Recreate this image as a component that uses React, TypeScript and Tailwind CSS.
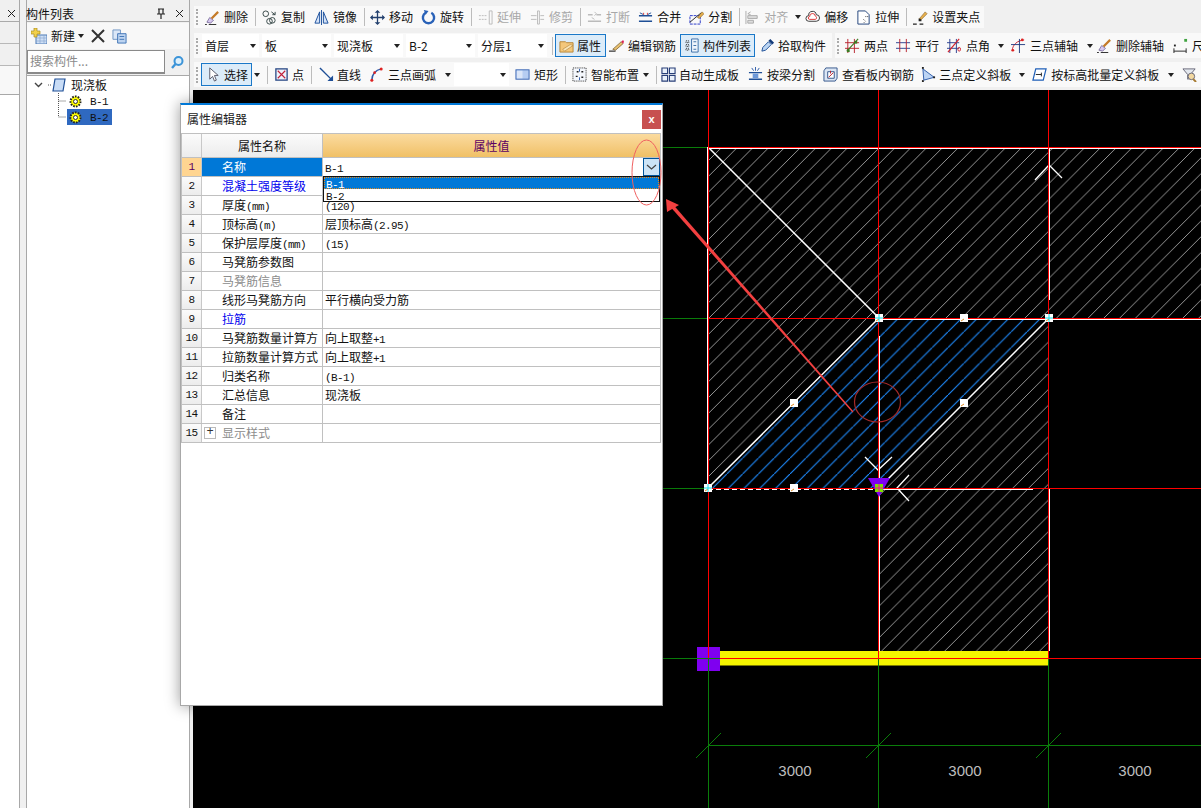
import type { ReactNode } from "react";

const cjk = "[font-family:'Noto_Sans_CJK_SC','Liberation_Sans',sans-serif]";

// icons are drawn on a 16x16 box
const icons: Record<string, ReactNode> = {
  broom: (<><path d="M0 15.5h2M4 15.5h8" stroke="#222" /><path d="M2 13l3-5 4 3-3 3z" fill="#d6c8ee" stroke="#5a4a80" strokeWidth=".7" /><path d="M7 9l7-7" stroke="#c47a28" strokeWidth="2.4" /></>),
  copy: (<><circle cx="4" cy="4" r="3" fill="none" stroke="#344" /><circle cx="11" cy="11" r="3" fill="none" stroke="#344" /><circle cx="8" cy="12" r="3" fill="none" stroke="#344" /><path d="M10 2l4 3M14 2v3h-3" fill="none" stroke="#344" /></>),
  mirror: (<><path d="M1 14L6 2v12zM15 14L10 2v12z" fill="#d4e2f7" stroke="#1b4f9c" /><path d="M8 0v16" stroke="#1b4f9c" /></>),
  move: (<><path d="M8 1v14M1 8h14" stroke="#23406e" strokeWidth="1.4" /><path d="M8 0l3 3H5zM8 16l3-3H5zM0 8l3-3v6zM16 8l-3-3v6z" fill="#23406e" /></>),
  rotate: (<><path d="M5 3a6 6 0 1 0 6 0" fill="none" stroke="#2a62b8" strokeWidth="2.6" /><path d="M3 0l5 1-3 4z" fill="#2a62b8" /></>),
  extend: (<><path d="M1 6h8M1 10h8" stroke="#bbb" strokeDasharray="2 1" /><path d="M12 1h3v14h-3z" fill="none" stroke="#bbb" /></>),
  trim: (<><path d="M1 6h6M1 10h6M11 6h4M11 10h4" stroke="#bbb" /><path d="M8 1h2v14H8z" fill="none" stroke="#bbb" /></>),
  breakLine: (<><path d="M1 5h5M10 5h5M1 12h14" stroke="#bbb" strokeWidth="1.6" /><path d="M8 2l2 2-2 2M5 8l3 2" fill="none" stroke="#bbb" /></>),
  merge: (<><path d="M1 6h14M1 12h14" stroke="#1f4f96" strokeWidth="1.6" /><path d="M2 3l4 2M14 3l-4 2" stroke="#1f4f96" /><path d="M6 3v2M10 3v2" stroke="#d33" /></>),
  split: (<><path d="M1 6h11v9H1z" fill="none" stroke="#2433c8" strokeDasharray="3 1" /><path d="M1 13L13 3" stroke="#222" /><path d="M9 8l5-6 2 2-5 5z" fill="#e8b04c" stroke="#7a5a20" strokeWidth=".6" /></>),
  align: (<><path d="M1 1v14" stroke="#aaa" /><path d="M3 6h10v3H3zM3 11h6v3H3z" fill="#ddd" stroke="#aaa" /><path d="M6 2L3 4l3 1" fill="none" stroke="#aaa" /></>),
  offset: (<><path d="M4 12a3 3 0 0 1 0-6 4 4 0 0 1 8-1 3.5 3.5 0 0 1 0 7z" fill="#fff" stroke="#333" /><path d="M5 10a1.5 1.5 0 0 1 0-3 2.5 2.5 0 0 1 6-.5 1.8 1.8 0 0 1 0 3.5z" fill="none" stroke="#d33" /></>),
  stretch: (<><path d="M2 1h8l4 4v10H2z" fill="#fff" stroke="#1d3f78" /><path d="M10 7h3M8 10l2 2-2 2" fill="none" stroke="#333" strokeDasharray="1 1" /></>),
  grip: (<><path d="M0 15h4M7 15h4" stroke="#222" strokeWidth="1.4" /><rect x="6" y="9" width="3" height="3" fill="#222" /><path d="M7 9l6-7 2 2-6 6z" fill="#e8b04c" stroke="#7a5a20" strokeWidth=".6" /></>),
  attr: (<><path d="M1 4h6l1 1h7v10H1z" fill="#f4c77a" stroke="#b78536" /><path d="M4 12l8-5 3 1-9 6z" fill="#f9e5b8" stroke="#a87a30" strokeWidth=".6" /></>),
  pencil: (<><path d="M0 14h7" stroke="#222" strokeWidth="1.2" /><path d="M4 12L13 4l2 2-8 7z" fill="#e8c070" stroke="#6a5020" strokeWidth=".7" /><path d="M13 4l2-2 1 2-1 2z" fill="#d25" /></>),
  list: (<><path d="M7 1h7v14H7z" fill="#eef4fb" stroke="#3a6ea8" /><path d="M9 4h3M9 8h3M9 12h3" stroke="#3a6ea8" /><path d="M1 3h3v2H1zM1 7h3v2H1zM1 11h3v2H1z" fill="none" stroke="#222" strokeDasharray="1 1" /></>),
  dropper: (<><path d="M2 14l1-4 6-6 3 3-6 6z" fill="#bcd6f4" stroke="#1d4f96" /><path d="M9 3l2-2 4 4-2 2z" fill="#123a78" /></>),
  twoPoint: (<><path d="M3 1v15M10 1v15M0 5h15M0 11h15" stroke="#b8232f" /><path d="M2 14L14 1" stroke="#3c7a22" strokeWidth="1.2" /><rect x="2" y="12" width="3" height="3" fill="#3c7a22" /><rect x="10" y="3" width="3" height="3" fill="#3c7a22" /></>),
  parallel: (<><path d="M0 5h15M0 11h15" stroke="#2a3f8f" /><path d="M4 1v14M11 1v14" stroke="#b8232f" /></>),
  angle: (<><path d="M3 1v15M10 1v15M0 5h13M0 11h13" stroke="#2a3f8f" /><path d="M1 15L13 1" stroke="#d2232f" strokeWidth="1.3" /><ellipse cx="13" cy="12" rx="1.4" ry="2" fill="none" stroke="#d2232f" /></>),
  arcAxis: (<><path d="M1 14C2 7 6 3 14 2" fill="none" stroke="#c8232f" /><path d="M9 1v15M0 7h15" stroke="#223d80" /><circle cx="2" cy="13" r="1.4" fill="#d22" /><circle cx="12" cy="2" r="1.4" fill="#d22" /></>),
  dim: (<><path d="M1 11v5M14 11v5M1 14h13" stroke="#222" /><rect x="1" y="7" width="2" height="2" fill="#222" /><rect x="12" y="1" width="3" height="3" fill="#3fa33f" /></>),
  pointer: (<path d="M4 1v12l3-3 2 5 2-1-2-5h4z" fill="#fff" stroke="#556" />),
  point: (<><rect x="2" y="2" width="12" height="12" fill="#eef3fb" stroke="#2c4a86" strokeWidth="1.4" /><path d="M4 4l8 8M12 4l-8 8" stroke="#c0223a" strokeWidth="1.2" /></>),
  line: (<><path d="M1 1l13 13" stroke="#1e4e96" strokeWidth="1.5" /><path d="M15 15V9l-6 6z" fill="#1e4e96" /></>),
  arc: (<><path d="M3 14C3 8 7 3 13 2" fill="none" stroke="#2c5aa8" strokeWidth="1.6" /><circle cx="3" cy="14" r="1.6" fill="#d22" /><circle cx="6" cy="6" r="1.4" fill="#d22" /><circle cx="13" cy="2" r="1.6" fill="#d22" /></>),
  rect: (<><rect x="1" y="3" width="14" height="10" fill="#b6cdf2" stroke="#3763b0" /><rect x="2" y="4" width="6" height="8" fill="#dbe6f8" /></>),
  smart: (<><rect x="1" y="1" width="14" height="14" fill="#f4f7fc" stroke="#222" strokeDasharray="1 1" /><path d="M5 5h2M4 10h2M10 5h2M10 11h2" stroke="#222" strokeWidth="1.5" /><path d="M8 2v3M8 11v3" stroke="#2c5aa8" /></>),
  auto: (<><path d="M1 1h6v6H1zM9 1h6v6H9zM1 9h6v6H1zM9 9h6v6H9z" fill="#eaf1fb" stroke="#283f78" strokeWidth="1.2" /></>),
  beam: (<><path d="M1 6h14M1 13h14" stroke="#1f4f96" strokeWidth="1.5" /><rect x="5" y="7" width="6" height="5" fill="#6d98d8" /><path d="M4 1l2 3M12 1l-2 3M8 0v4" stroke="#2c5aa8" /></>),
  view: (<><path d="M3 1h12v11L13 15H1V4z" fill="#dbe6f4" stroke="#33558c" /><path d="M5 5h7v7H5z" fill="#fff" stroke="#33558c" /><path d="M6 11l5-5M8 4v3" stroke="#b8232f" /></>),
  tri: (<><path d="M2 2l12 9-11 3z" fill="#bcd4f4" stroke="#2c5aa8" /><rect x="1" y="0" width="2" height="2" fill="#222" /><rect x="1" y="14" width="2" height="2" fill="#222" /><rect x="13" y="10" width="2" height="2" fill="#222" /></>),
  batch: (<><path d="M4 2h11l-3 12H1z" fill="#fff" stroke="#1f5fb8" strokeWidth="1.3" /><path d="M4 8h6M10 6v4" stroke="#222" /></>),
  zoomBox: (<><path d="M1 2h13L9 8v4L6 13V8z" fill="#e4e8ee" stroke="#667" /><circle cx="10" cy="10" r="3.5" fill="#f2d8a0" stroke="#667" /><path d="M12 13l3 3" stroke="#a67a30" strokeWidth="2" /></>),
  newItem: (<><path d="M5 7h11v9H5z" fill="#cfe0f6" stroke="#4a78b4" /><path d="M5 10h11M5 13h11M9 7v9M13 7v9" stroke="#8aa8d0" strokeWidth=".7" /><path d="M3 0h3v3h3v3H6v3H3V6H0V3h3z" fill="#f2d04a" stroke="#a88a20" strokeWidth=".7" /></>),
  dupe: (<><path d="M1 1h8v10H1z" fill="#dbe7f7" stroke="#6f94c2" /><path d="M6 5h9v10H6z" fill="#bcd3f0" stroke="#3f73b5" /><path d="M8 8h5M8 11h5" stroke="#3f73b5" /></>),
};

function Icon({ name, size = 16 }: { name: string; size?: number }) {
  return (
    <svg viewBox="0 0 16 16" width={size} height={size} className="shrink-0">
      {icons[name]}
    </svg>
  );
}

function Caret({ cls = "" }: { cls?: string }) {
  return <span className={`block shrink-0 w-0 h-0 border-x-[3.5px] border-x-transparent border-t-[4px] border-t-[#222] ${cls}`} />;
}

function Grip() {
  return <span className="w-[3px] h-[16px] shrink-0 border-l-[2px] border-dotted border-l-[#aaa]" />;
}

function Sep() {
  return <i className="w-px h-[18px] -ml-px -mr-[3px] shrink-0 bg-[#bcbcbc]" />;
}

function Tool(props: { icon: string; label: string; dim?: boolean; caret?: boolean; caretCls?: string; box?: string; cls?: string }) {
  return (
    <div className={`flex items-center shrink-0 gap-1 ${props.dim ? "text-[#a8a8a8]" : "text-[#111]"} ${props.cls ?? ""}`}>
      <span className={`flex justify-center shrink-0 ${props.box ?? "w-4"}`}>
        <Icon name={props.icon} size={15} />
      </span>
      <span>{props.label}</span>
      {props.caret && <Caret cls={props.caretCls ?? ""} />}
    </div>
  );
}

function Toggle({ icon, label, cls }: { icon: string; label: string; cls: string }) {
  return (
    <div className={`flex items-center h-[23px] shrink-0 border border-[#1a78c8] bg-[#dcecf9] ${cls}`}>
      <Icon name={icon} size={15} />
      <span className="ml-[3px]">{label}</span>
    </div>
  );
}

function Pick({ text, cls }: { text: string; cls: string }) {
  return (
    <div className={`flex items-center justify-between h-[23px] pl-[3px] pr-[3px] shrink-0 bg-white ${cls}`}>
      <span>{text}</span>
      <Caret />
    </div>
  );
}

// latin runs use a narrow mono so they keep the width of the old bitmap font
function T({ s }: { s: string }) {
  return (
    <>
      {s.split(/([\x00-\x7f]+)/).map((p, i) =>
        /[\x00-\x7f]/.test(p) ? (
          <span key={i} className="[font-family:'Liberation_Mono',monospace] text-[11px] tracking-[-0.6px]">{p}</span>
        ) : (
          <span key={i}>{p}</span>
        )
      )}
    </>
  );
}

const rows = [
  { name: "名称", value: "B-1" },
  { name: "混凝土强度等级", value: "", tone: "text-[#0000ee]" },
  { name: "厚度(mm)", value: "(120)" },
  { name: "顶标高(m)", value: "层顶标高(2.95)" },
  { name: "保护层厚度(mm)", value: "(15)" },
  { name: "马凳筋参数图", value: "" },
  { name: "马凳筋信息", value: "", tone: "text-[#8c8c8c]" },
  { name: "线形马凳筋方向", value: "平行横向受力筋" },
  { name: "拉筋", value: "", tone: "text-[#0000ee]" },
  { name: "马凳筋数量计算方", value: "向上取整+1" },
  { name: "拉筋数量计算方式", value: "向上取整+1" },
  { name: "归类名称", value: "(B-1)" },
  { name: "汇总信息", value: "现浇板" },
  { name: "备注", value: "" },
  { name: "显示样式", value: "", tone: "text-[#8c8c8c]", plus: true },
];

function PropertyDialog() {
  return (
    <div className="absolute left-[180px] top-[103px] w-[483px] h-[603px] z-10 bg-white border border-[#a8a8a8] border-t-2 border-t-[#0078d7] shadow-[0_0_14px_rgba(0,0,0,0.4)]">
      <div className="flex items-start h-[28px] pl-[6px]">
        <span className="mt-[5px] text-[#222]">属性编辑器</span>
        <button className="ml-auto mt-[5px] mr-px w-[19px] h-[19px] bg-[#c75050] text-white text-[11px] font-bold leading-[17px] [font-family:'Liberation_Sans',sans-serif]">x</button>
      </div>
      <div className="w-[480px] border-l border-r border-t border-[#c0c0c0]">
        <div className="flex h-[24px] border-b border-[#c0c0c0]">
          <div className="w-[20px] border-r border-[#c8c8c8] bg-gradient-to-b from-[#fbfbfb] to-[#ececec]" />
          <div className="w-[121px] border-r border-[#c0c0c0] flex items-center justify-center bg-gradient-to-b from-[#fbfbfb] to-[#ececec]">属性名称</div>
          <div className="flex-1 flex items-center justify-center text-[#5b0063] bg-gradient-to-b from-[#fbdb9f] to-[#f0c065]">属性值</div>
        </div>
        {rows.map((r, i) => (
          <div key={r.name} className="flex h-[19px] leading-[18px] border-b border-[#c0c0c0]">
            <div className={`w-[20px] border-r border-[#c8c8c8] text-center [font-family:'Liberation_Mono',monospace] text-[11px] tracking-[-0.6px] ${i === 0 ? "bg-[#ffd591] text-[#5b0063]" : "bg-gradient-to-b from-[#fbfbfb] to-[#ececec]"}`}>
              {i + 1}
            </div>
            <div className={`relative w-[121px] border-r border-[#c0c0c0] pl-[20px] whitespace-nowrap overflow-hidden ${i === 0 ? "bg-[#0078d7] text-white" : r.tone ?? ""}`}>
              {r.plus && (
                <span className="absolute left-[2px] top-[3px] w-[12px] h-[12px] border border-[#bbb] text-[#333] text-[12px] leading-[9px] text-center [font-family:'Liberation_Mono',monospace]">+</span>
              )}
              <T s={r.name} />
            </div>
            <div className="relative flex-1 pl-[2px] whitespace-nowrap">
              <T s={r.value} />
              {i === 0 && (
                <>
                  <div className="absolute right-0 top-0 w-[17px] h-[18px] border border-[#005499] bg-[#cce4f7] flex items-center justify-center">
                    <svg width="11" height="6" viewBox="0 0 11 6"><path d="M1 1l4.5 4L10 1" fill="none" stroke="#444" strokeWidth="1.2" /></svg>
                  </div>
                  <div className="absolute left-0 right-0 top-[18px] h-[26px] z-10 bg-white border border-[#111] leading-[12px]">
                    <div className="h-[12px] pl-[2px] bg-[#0078d7] text-white outline-dotted outline-1 -outline-offset-1 outline-[#e08a20]">
                      <T s="B-1" />
                    </div>
                    <div className="h-[12px] pl-[2px]"><T s="B-2" /></div>
                  </div>
                </>
              )}
            </div>
          </div>
        ))}
      </div>
    </div>
  );
}

function Gear() {
  return (
    <svg width="13" height="13" viewBox="0 0 13 13" className="shrink-0">
      <circle cx="6.5" cy="6.5" r="5" fill="#ffff00" stroke="#222" strokeWidth="2" strokeDasharray="1.6 1.2" />
      <circle cx="6.5" cy="6.5" r="2" fill="#fff" stroke="#333" />
    </svg>
  );
}

function ListPanel() {
  return (
    <div className="w-[164px] shrink-0 flex flex-col ml-[6px] border-l border-r border-[#a8a8a8]">
      <div className="h-[16px] mt-[6px] flex items-center pr-[3px] border-b border-[#aaa]">
        <span className="text-[#111] -ml-px">构件列表</span>
        <svg width="10" height="11" viewBox="0 0 10 11" className="ml-auto mr-[9px]"><path d="M2 1h6M3 1v5M7 1v5M1 6h8M5 6v5" stroke="#222" fill="none" strokeWidth="1.2" /></svg>
        <svg width="9" height="9" viewBox="0 0 9 9" className="mr-[2px]"><path d="M1 1l7 7M8 1L1 8" stroke="#222" /></svg>
      </div>
      <div className="h-[26px] mt-px flex items-center pl-[4px] bg-[#f8f8f8]">
        <Icon name="newItem" size={16} />
        <span className="ml-[4px] text-[#111]">新建</span>
        <Caret cls="ml-[3px]" />
        <svg width="14" height="14" viewBox="0 0 14 14" className="ml-[7px]"><path d="M1 1l12 12M13 1L1 13" stroke="#333" strokeWidth="2" /></svg>
        <span className="ml-[7px]"><Icon name="dupe" size={15} /></span>
      </div>
      <div className="h-[24px] mt-px flex">
        <div className="w-[138px] border border-[#8a8a8a] border-b-2 bg-white pl-[2px] leading-[20px] text-[#8a8a8a]">搜索构件...</div>
        <div className="flex-1 flex items-center justify-center">
          <svg width="15" height="15" viewBox="0 0 15 15"><circle cx="8.5" cy="6" r="4" fill="#dff0fb" stroke="#3c94d8" strokeWidth="2" /><path d="M5.5 9L2 13" stroke="#3c94d8" strokeWidth="2.4" /></svg>
        </div>
      </div>
      <div className="relative flex-1 mt-px pt-px bg-white border-t border-[#a8a8a8]">
        <svg width="40" height="50" className="absolute left-[18px] top-px">
          <path d="M3 8h3M13.5 16v24M13.5 24h8M13.5 40h8" stroke="#555" strokeDasharray="1 1" fill="none" />
        </svg>
        <div className="relative flex items-center h-[16px]">
          <svg width="9" height="6" viewBox="0 0 9 6" className="ml-[7px]"><path d="M1 1l3.5 3.5L8 1" fill="none" stroke="#444" strokeWidth="1.4" /></svg>
          <svg width="14" height="14" viewBox="0 0 14 14" className="ml-[9px]"><path d="M3 1h10l-2 12H1z" fill="#c8dcf6" stroke="#1f4f96" strokeWidth="1.2" /></svg>
          <span className="ml-[5px] text-[#111]">现浇板</span>
        </div>
        <div className="relative flex items-center h-[16px] ml-[42px]">
          <Gear />
          <span className="ml-[8px]"><T s="B-1" /></span>
        </div>
        <div className="relative flex items-center h-[16px] ml-[40px] pl-[2px] w-[45px] bg-[#2f69c0]">
          <Gear />
          <span className="ml-[8px]"><T s="B-2" /></span>
        </div>
      </div>
    </div>
  );
}

function Toolbars() {
  return (
    <div className="pt-[6px] pb-[3px] pl-px text-[12px] whitespace-nowrap overflow-hidden">
      <div className="flex items-center gap-2 w-[790px] h-[22px] pl-[2px] bg-[#f9f9f9]">
        <Grip />
        <Tool icon="broom" label="删除" cls="-ml-[3px]" />
        <Sep />
        <Tool icon="copy" label="复制" />
        <Tool icon="mirror" label="镜像" />
        <Sep />
        <Tool icon="move" label="移动" box="w-[15px]" />
        <Tool icon="rotate" label="旋转" box="w-[15px]" />
        <Sep />
        <Tool icon="extend" label="延伸" dim />
        <Tool icon="trim" label="修剪" dim />
        <Sep />
        <Tool icon="breakLine" label="打断" dim />
        <Tool icon="merge" label="合并" cls="-ml-px" />
        <Tool icon="split" label="分割" cls="-ml-px" />
        <Sep />
        <Tool icon="align" label="对齐" dim caret caretCls="ml-[3px]" box="w-[15px]" />
        <Tool icon="offset" label="偏移" cls="-ml-[5px]" />
        <Tool icon="stretch" label="拉伸" box="w-[15px]" />
        <Sep />
        <Tool icon="grip" label="设置夹点" />
      </div>
      <div className="flex mt-[5px] h-[25px]">
        <div className="flex items-center w-[638px] pl-[2px] bg-[#f9f9f9]">
          <Grip />
          <div className="flex items-center gap-[3px] ml-[3px]">
            <Pick text="首层" cls="w-[57px]" />
            <Pick text="板" cls="w-[69px]" />
            <Pick text="现浇板" cls="w-[69px]" />
            <Pick text="B-2" cls="w-[69px]" />
            <Pick text="分层1" cls="w-[69px]" />
          </div>
          <i className="w-px h-[18px] ml-[5px] bg-[#bcbcbc]" />
          <Toggle icon="attr" label="属性" cls="w-[51px] ml-[2px] pl-[3px]" />
          <Tool icon="pencil" label="编辑钢筋" cls="ml-[2px]" />
          <Toggle icon="list" label="构件列表" cls="w-[75px] ml-[4px] pl-[4px]" />
          <Tool icon="dropper" label="拾取构件" box="w-[13px]" cls="ml-[6px]" />
        </div>
        <div className="flex items-center gap-2 flex-1 ml-[3px] pl-[2px] bg-[#f9f9f9] overflow-hidden">
          <Grip />
          <Tool icon="twoPoint" label="两点" box="w-[15px]" cls="-ml-[3px]" />
          <Tool icon="parallel" label="平行" box="w-[15px]" />
          <Tool icon="angle" label="点角" box="w-[15px]" caret caretCls="ml-[4px]" />
          <Tool icon="arcAxis" label="三点辅轴" caret caretCls="ml-[5px]" cls="-ml-[2px]" />
          <Tool icon="broom" label="删除辅轴" cls="-ml-[5px]" />
          <Tool icon="dim" label="尺寸标注" />
        </div>
      </div>
      <div className="flex items-center gap-2 mt-[4px] h-[25px] pl-[2px] bg-[#f9f9f9] overflow-hidden">
        <Grip />
        <Toggle icon="pointer" label="选择" cls="w-[51px] -ml-[6px] pl-[4px]" />
        <Caret cls="-ml-[6px]" />
        <Sep />
        <Tool icon="point" label="点" cls="[&>span:first-child]:mr-[-1px]" />
        <Sep />
        <Tool icon="line" label="直线" box="w-[14px]" cls="ml-[2px]" />
        <Tool icon="arc" label="三点画弧" box="w-[15px]" caret caretCls="ml-[5px]" />
        <Pick text="" cls="w-[55px] -ml-[5px]" />
        <Tool icon="rect" label="矩形" box="w-[15px]" cls="-ml-[2px]" />
        <Sep />
        <Tool icon="smart" label="智能布置" box="w-[15px]" caret cls="ml-px" />
        <Sep />
        <Tool icon="auto" label="自动生成板" box="w-[13px]" />
        <Tool icon="beam" label="按梁分割" />
        <Tool icon="view" label="查看板内钢筋" cls="-ml-px" />
        <Tool icon="tri" label="三点定义斜板" box="w-[13px]" caret caretCls="ml-[4px]" />
        <Tool icon="batch" label="按标高批量定义斜板" box="w-[15px]" caret caretCls="ml-[5px]" cls="-ml-px" />
        <Tool icon="zoomBox" label="查找" cls="-ml-px" />
      </div>
    </div>
  );
}

function Handle({ x, y }: { x: number; y: number }) {
  return (
    <g>
      <rect x={x - 4} y={y - 4} width="8" height="8" fill="#fff" />
      <path d={`M${x - 3} ${y + 3}l3-2`} stroke="#e08a20" />
    </g>
  );
}

function Cad() {
  const ticks = [708, 878, 1048];
  return (
    <svg viewBox="193 90 1008 718" width="1008" height="718" className="block">
      <defs>
        <pattern id="hatch" patternUnits="userSpaceOnUse" width="15.8" height="15.8">
          <path d="M-1 16.8L16.8 -1" stroke="#bcbcbc" strokeWidth="0.8" />
        </pattern>
        <pattern id="hatchBlue" patternUnits="userSpaceOnUse" width="15.8" height="15.8">
          <path d="M-1 16.8L16.8 -1" stroke="#1f8cff" strokeWidth="1.1" />
        </pattern>
      </defs>
      <path d="M708 147H1201V318H1049V488L1049 658H879V488L1049 318H879L708 488V147z" fill="url(#hatch)" />
      <path d="M708 488L879 318H1049L879 488z" fill="url(#hatchBlue)" />
      <rect x="720" y="651" width="328" height="14.5" fill="#f5f500" />
      {/* green axes */}
      <path d="M193 147.5H708M193 318.5H708M193 488.5H708M193 658.5H708M708.5 658V808M878.5 658V808M1048.5 658V808M708 745.5H1201" stroke="#0a7d0a" fill="none" />
      {ticks.map((x) => (
        <path key={x} d={`M${x - 12} ${758}L${x + 13} ${733}`} stroke="#0a7d0a" />
      ))}
      {/* white outline */}
      <path d="M707.5 147V488M708 148.5H1201M879 319.5H1201M1049.5 147V300M879.5 336V488M879 489.5H1033M879.5 488V651M1049.5 488V651" stroke="#fff" fill="none" strokeWidth="1" />
      <path d="M708 147L879 318M708 488L879 318M1049 318L879 488" stroke="#fff" strokeWidth="1.5" />
      <path d="M708 489.5H879" stroke="#fff" strokeDasharray="5 3" />
      <path d="M1035 180L1049 165L1062 178M865 457L878 470L892 457M909 475L897 488L909 501" stroke="#fff" strokeWidth="1.3" fill="none" />
      {/* red axes */}
      <path d="M708.5 90V658M878.5 90V658M1048.5 90V658M708 147.5H1201M708 318.5H1201M708 488.5H1201M708 658.5H1201" stroke="#ff0000" fill="none" />
      <rect x="697" y="647" width="23" height="24" fill="#7f00f0" />
      <path d="M708.5 647V658.5H697" stroke="#ff0000" fill="none" />
      <path d="M697 658.5H720M708.5 658.5V671" stroke="#0a7d0a" />
      <Handle x={879} y={318} />
      <Handle x={964} y={318} />
      <Handle x={1049} y={318} />
      <Handle x={794} y={403} />
      <Handle x={964} y={403} />
      <Handle x={794} y={488} />
      <Handle x={708} y={488} />
      <path d="M875 318h8M879 314v8M1045 318h8M1049 314v8M704 488h8M708 484v8" stroke="#12e0e8" />
      <path d="M868 478H890L879 497z" fill="#7f00f0" />
      <rect x="875" y="484" width="8" height="8" fill="#7fe000" />
      <path d="M879 484v8M875 488h8" stroke="#ff00aa" />
      {[795, 965, 1135].map((x) => (
        <text key={x} x={x} y="776" textAnchor="middle" fill="#bdbdbd" fontSize="15" className="[font-family:'Liberation_Sans',sans-serif]">3000</text>
      ))}
    </svg>
  );
}

export default function App() {
  return (
    <div className={`relative flex w-[1201px] h-[808px] overflow-hidden bg-[#f0f0f0] text-[12px] text-[#111] ${cjk}`}>
      {/* docked panel cut off on the left */}
      <div className="w-[20px] shrink-0 flex flex-col border-r border-[#a8a8a8]">
        <div className="h-[16px] mt-[6px] flex items-center justify-end pr-[3px] border-b border-[#aaa]">
          <svg width="9" height="9" viewBox="0 0 9 9"><path d="M1 1l7 7M8 1L1 8" stroke="#222" /></svg>
        </div>
        <div className="h-[22px] border-b border-[#b8b8b8]" />
        <div className="h-[22px] border-b border-[#b8b8b8]" />
        <div className="h-[28px] bg-[#f8f8f8]" />
        <div className="flex-1 bg-white border-t border-[#a8a8a8]" />
      </div>
      <ListPanel />
      <div className="flex-1 flex flex-col min-w-0 ml-[3px]">
        <Toolbars />
        <div className="flex-1 bg-black overflow-hidden">
          <Cad />
        </div>
      </div>
      <PropertyDialog />
      {/* red markup drawn on top of the screenshot */}
      <svg width="1201" height="808" className="absolute left-0 top-0 z-20 pointer-events-none">
        <ellipse cx="646.5" cy="172.5" rx="14.5" ry="32.5" fill="none" stroke="#f06060" />
        <ellipse cx="877.5" cy="402" rx="23" ry="20" fill="none" stroke="#a52a2a" strokeWidth="1.2" />
        <path d="M666 199L667 212L679 205z" fill="#f24040" />
        <path d="M673.5 205L671 207.5L852.5 412.5L853.5 411.5z" fill="#f24040" />
      </svg>
    </div>
  );
}
